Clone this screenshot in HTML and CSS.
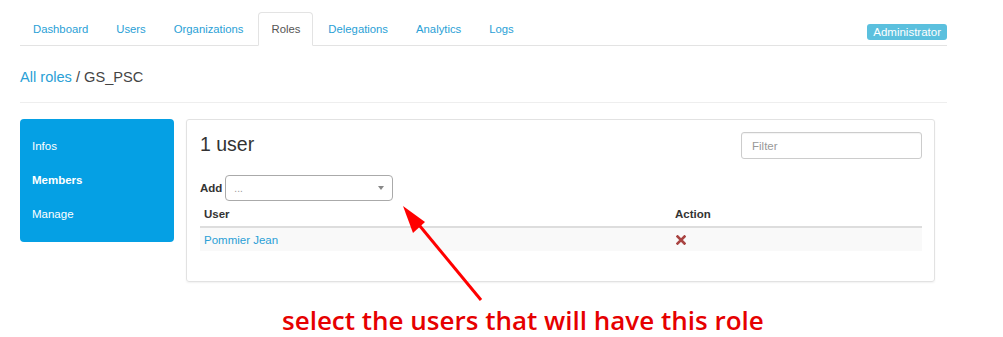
FILE: index.html
```html
<!DOCTYPE html>
<html lang="en">

<head>
    <meta charset="UTF-8">
    <meta name="viewport" content="width=device-width, initial-scale=1.0">
    <title>Roles - GS_PSC</title>
    <link rel="stylesheet" href="styles.css">
</head>

<body>
    <div class="page">
        <nav class="tabs">
            <a href="#" class="tab">Dashboard</a>
            <a href="#" class="tab">Users</a>
            <a href="#" class="tab">Organizations</a>
            <a href="#" class="tab active">Roles</a>
            <a href="#" class="tab">Delegations</a>
            <a href="#" class="tab">Analytics</a>
            <a href="#" class="tab">Logs</a>
            <span class="badge">Administrator</span>
        </nav>

        <div class="breadcrumb">
            <a href="#">All roles</a> / GS_PSC
        </div>

        <hr class="divider">

        <div class="main">
            <ul class="side-menu">
                <li>Infos</li>
                <li class="active">Members</li>
                <li>Manage</li>
            </ul>

            <div class="panel">
                <div class="panel-head">
                    <h2>1 user</h2>
                    <input type="text" class="filter" placeholder="Filter">
                </div>

                <div class="add-row">
                    <label>Add</label>
                    <div class="select">
                        <span class="placeholder">...</span>
                        <span class="caret"></span>
                    </div>
                </div>

                <table class="members">
                    <tr>
                        <th class="col-user">User</th>
                        <th>Action</th>
                    </tr>
                    <tr>
                        <td><a href="#">Pommier Jean</a></td>
                        <td>
                            <svg class="remove" width="10" height="10" viewBox="0 0 10 10">
                                <path d="M1.5 1.5 L8.5 8.5 M8.5 1.5 L1.5 8.5" stroke="#a94442" stroke-width="2.6" stroke-linecap="square" />
                            </svg>
                        </td>
                    </tr>
                </table>
            </div>
        </div>

        <p class="note">select the users that will have this role</p>
    </div>

    <!-- annotation arrow drawn over the page -->
    <svg class="arrow" width="1003" height="337" viewBox="0 0 1003 337">
        <line x1="481" y1="300" x2="410" y2="214" stroke="#f00" stroke-width="3" />
        <polygon points="403,206 413,233 425,222" fill="#f00" />
    </svg>
</body>

</html>
```

FILE: styles.css
```css
body {
    font-family: 'Liberation Sans', Arial, sans-serif;
    margin: 0;
    background-color: #fff;
    color: #333;
    overflow: hidden;
}

a {
    color: #2a9fd6;
    text-decoration: none;
}

.page {
    width: 927px;
    padding: 12px 0 0 20px;
}

/* top tabs */
.tabs {
    display: flex;
    border-bottom: 1px solid #e3e3e3;
    height: 33px;
}

.tab {
    font-size: 11.3px;
    line-height: 16px;
    padding: 8px 12px;
    margin-right: 2px;
    border: 1px solid transparent;
    border-radius: 4px 4px 0 0;
    margin-bottom: -1px;
}

.tab.active {
    color: #555;
    background-color: #fff;
    border-color: #e3e3e3;
    border-bottom-color: #fff;
}

.badge {
    margin-left: auto;
    align-self: flex-start;
    margin-top: 12px;
    background-color: #5bc0de;
    color: #fff;
    font-size: 11.5px;
    line-height: 16px;
    padding: 0 6px;
    border-radius: 3px;
}

.breadcrumb {
    margin-top: 21px;
    font-size: 14.6px;
    line-height: 20px;
    color: #444;
}

.divider {
    border: 0;
    border-top: 1px solid #eee;
    margin: 15px 0 0 0;
}

.main {
    display: flex;
    margin-top: 16px;
    align-items: flex-start;
}

.side-menu {
    list-style: none;
    margin: 0;
    padding: 17px 0 0 0;
    width: 154px;
    height: 106px;
    background-color: #05a0e4;
    border-radius: 4px;
}

.side-menu li {
    color: #fff;
    font-size: 11.5px;
    line-height: 16px;
    padding: 2px 12px 16px 12px;
}

.side-menu li.active {
    font-weight: bold;
}

.panel {
    margin-left: 12px;
    width: 722px;
    height: 149px;
    padding: 12px 12px 0 13px;
    border: 1px solid #e2e2e2;
    border-radius: 3px;
    box-shadow: 0 1px 2px rgba(0, 0, 0, 0.06);
}

.panel-head {
    display: flex;
    justify-content: space-between;
    align-items: center;
}

.panel-head h2 {
    margin: -3px 0 0 0;
    font-size: 19.5px;
    font-weight: normal;
    color: #333;
}

.filter {
    width: 181px;
    height: 27px;
    box-sizing: border-box;
    border: 1px solid #ccc;
    border-radius: 3px;
    padding: 0 10px;
    font-family: 'Liberation Sans', Arial, sans-serif;
    font-size: 11.5px;
    box-shadow: inset 0 1px 1px rgba(0, 0, 0, 0.05);
}

.filter::placeholder {
    color: #999;
}

.add-row {
    display: flex;
    align-items: center;
    margin-top: 16px;
}

.add-row label {
    font-size: 11.5px;
    font-weight: bold;
    margin-right: 3px;
}

.select {
    display: flex;
    align-items: center;
    justify-content: space-between;
    width: 168px;
    height: 26px;
    box-sizing: border-box;
    border: 1px solid #aaa;
    border-radius: 4px;
    padding: 0 8px;
}

.placeholder {
    color: #999;
    font-size: 10px;
}

.caret {
    width: 0;
    height: 0;
    border-left: 3px solid transparent;
    border-right: 3px solid transparent;
    border-top: 4px solid #888;
}

.members {
    width: 100%;
    border-collapse: collapse;
    font-size: 11.5px;
}

.members th {
    text-align: left;
    font-weight: bold;
    line-height: 16px;
    padding: 5px 4px 4px 4px;
    border-bottom: 2px solid #ddd;
}

.members th.col-user {
    width: 463px;
}

.members td {
    line-height: 16px;
    padding: 4px 4px 3px 4px;
    background-color: #f9f9f9;
}

.remove {
    display: block;
    margin-left: 1px;
}

.note {
    margin: 25px 0 0 262px;
    font-family: 'Open Sans', sans-serif;
    font-size: 26px;
    font-weight: 600;
    line-height: 26px;
    color: #e60000;
    white-space: nowrap;
}

.arrow {
    position: absolute;
    left: 0;
    top: 0;
    pointer-events: none;
}
```
